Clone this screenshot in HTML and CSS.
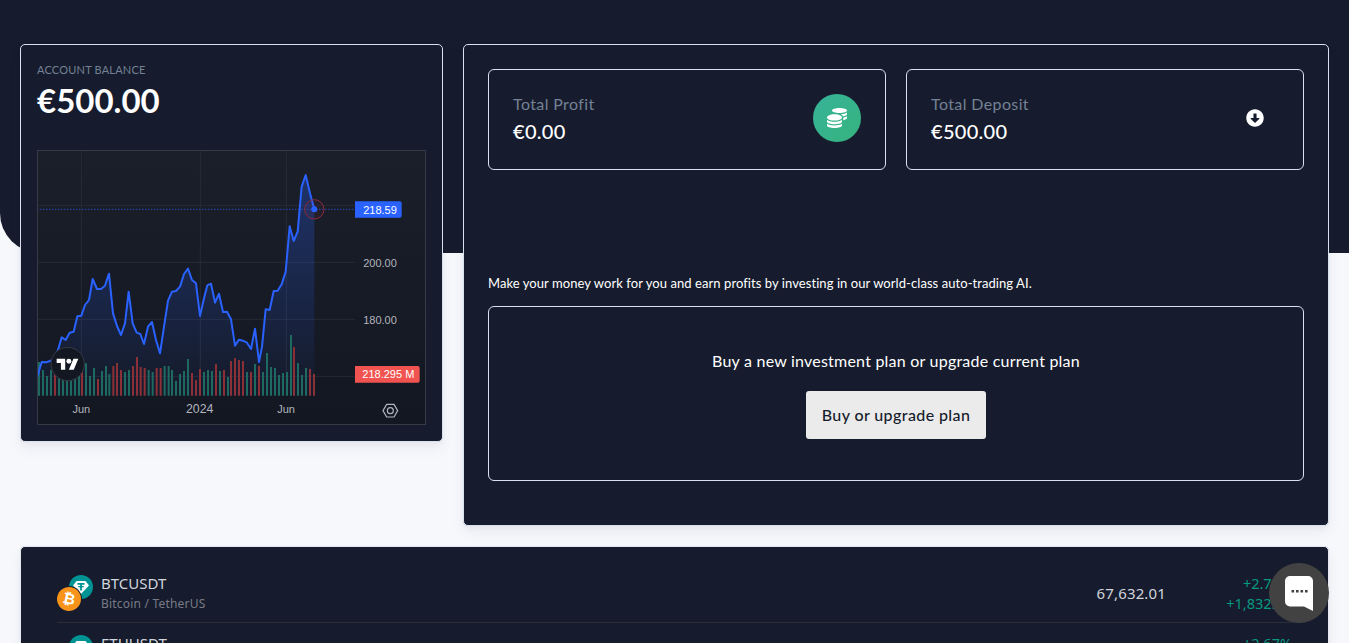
FILE: index.html
```html
<!DOCTYPE html>
<html lang="en">
<head>
    <meta charset="UTF-8">
    <meta name="viewport" content="width=device-width, initial-scale=1.0">
    <title>Dashboard</title>
    <link rel="stylesheet" href="styles.css">
</head>
<body>
    <div class="hero"></div>

    <main class="content">
        <div class="top-row">
            <section class="card balance-card">
                <p class="balance-label">Account Balance</p>
                <h1 class="balance-value">€500.00</h1>

                <div class="chart">
                    <svg class="chart-svg" viewBox="54 63 1161 819" width="387" height="273">
                        <defs>
                            <linearGradient id="chart-bg" x1="0" y1="0" x2="0" y2="1">
                                <stop offset="0" stop-color="#1b1f29"/>
                                <stop offset="1" stop-color="#131722"/>
                            </linearGradient>
                            <linearGradient id="area-fill" x1="0" y1="0" x2="0" y2="1">
                                <stop offset="0" stop-color="#2962ff" stop-opacity="0.3"/>
                                <stop offset="1" stop-color="#2962ff" stop-opacity="0.03"/>
                            </linearGradient>
                        </defs>

                        <rect x="52" y="60" width="1164" height="823" fill="url(#chart-bg)"/>

                        <!-- grid -->
                        <path class="grid" d="M52 226H1005M52 397H1005M52 568H1005M52 739H1005M184 60V797M541 60V797M799 60V797"/>

                        <!-- area + line -->
                        <polygon fill="url(#area-fill)" points="52,797 52,740 65,696 78,697 90,693 102,687 114,660 125,622 137,630 149,608 161,605 172,559 184,557 195,525 207,510 218,447 231,477 243,477 255,467 267,431 279,550 291,588 303,615 315,580 326,485 338,580 350,608 361,612 372,642 384,590 396,576 408,630 420,670 432,590 444,512 456,485 468,483 480,470 492,432 504,416 516,450 528,460 540,558 552,505 562,466 573,461 585,518 597,491 609,546 621,545 633,568 645,647 657,629 669,632 681,638 693,657 705,596 717,696 726,650 737,538 749,540 761,483 773,482 785,463 797,425 809,289 821,333 833,305 845,170 857,135 870,190 883,238 883,797"/>

                        <!-- volume -->
                        <path class="vol-up" d="M57 797V696M69 797V720M81 797V738M93 797V720M117 797V725M129 797V735M141 797V730M153 797V725M165 797V720M177 797V715M198 797V700M210 797V738M222 797V714M246 797V723M258 797V708M268 797V732M315 797V726M327 797V720M386 797V720M398 797V726M434 797V708M446 797V708M456 797V720M468 797V753M480 797V732M492 797V723M504 797V687M552 797V726M564 797V720M576 797V723M600 797V723M624 797V741M681 797V726M705 797V702M729 797V726M741 797V669M753 797V711M765 797V714M777 797V735M789 797V729M801 797V726M813 797V615M834 797V699M846 797V735M858 797V714"/>
                        <path class="vol-down" d="M105 797V730M186 797V700M234 797V747M280 797V708M291 797V699M303 797V720M339 797V708M351 797V681M362 797V711M374 797V714M410 797V714M422 797V714M516 797V729M528 797V750M540 797V717M588 797V702M612 797V720M633 797V693M645 797V684M657 797V690M669 797V693M693 797V726M717 797V708M822 797V651M870 797V717M882 797V732"/>

                        <polyline class="price-line" points="52,740 65,696 78,697 90,693 102,687 114,660 125,622 137,630 149,608 161,605 172,559 184,557 195,525 207,510 218,447 231,477 243,477 255,467 267,431 279,550 291,588 303,615 315,580 326,485 338,580 350,608 361,612 372,642 384,590 396,576 408,630 420,670 432,590 444,512 456,485 468,483 480,470 492,432 504,416 516,450 528,460 540,558 552,505 562,466 573,461 585,518 597,491 609,546 621,545 633,568 645,647 657,629 669,632 681,638 693,657 705,596 717,696 726,650 737,538 749,540 761,483 773,482 785,463 797,425 809,289 821,333 833,305 845,170 857,135 870,190 883,238"/>
                        <path class="last-price" d="M52 238H1005"/>
                        <circle class="pulse" cx="883" cy="238" r="29"/>
                        <circle class="dot" cx="883" cy="238" r="9"/>

                        <!-- axis labels -->
                        <path class="tag-blue" d="M1005 214H1139a6 6 0 0 1 6 6V257a6 6 0 0 1 -6 6H1005Z"/>
                        <text class="axis-tag" x="1080" y="251">218.59</text>
                        <text class="axis-text" x="1080" y="412">200.00</text>
                        <text class="axis-text" x="1080" y="583">180.00</text>
                        <path class="tag-red" d="M1005 708H1193a6 6 0 0 1 6 6V752a6 6 0 0 1 -6 6H1005Z"/>
                        <text class="axis-tag" x="1105" y="745">218.295 M</text>
                        <text class="axis-text" x="184" y="850">Jun</text>
                        <text class="axis-text axis-year" x="539" y="850">2024</text>
                        <text class="axis-text" x="798" y="850">Jun</text>

                        <!-- settings hexagon -->
                        <path class="gear" d="M1100 823H1122L1133 842L1122 861H1100L1089 842Z"/>
                        <circle class="gear" cx="1111" cy="842" r="9"/>

                        <!-- tv logo -->
                        <circle class="tv-badge" cx="143" cy="702" r="50"/>
                        <g class="tv-mark" transform="translate(110 679) scale(1.83)">
                            <path d="M14 22H7V11H0V4h14v18zM28 22h-8l7.5-18h8L28 22z"/>
                            <circle cx="20" cy="8" r="4"/>
                        </g>
                    </svg>
                </div>
            </section>

            <section class="card summary-card">
                <div class="stat-row">
                    <div class="stat-box">
                        <div>
                            <p class="stat-label">Total Profit</p>
                            <p class="stat-value">€0.00</p>
                        </div>
                        <span class="stat-icon stat-icon-green">
                            <svg viewBox="0 0 512 512" width="20" height="20"><path fill="#fff" d="M0 405.3V448c0 35.3 86 64 192 64s192-28.7 192-64v-42.7C342.7 434.4 267.2 448 192 448S41.3 434.4 0 405.3zM320 128c106 0 192-28.7 192-64S426 0 320 0 128 28.7 128 64s86 64 192 64zM0 300.4V352c0 35.3 86 64 192 64s192-28.7 192-64v-51.6c-41.3 34-116.9 51.6-192 51.6S41.3 334.4 0 300.4zm416 11c57.3-11.1 96-31.7 96-55.4v-42.7c-23.2 16.4-57.3 27.6-96 34.5v63.6zM192 160C86 160 0 195.8 0 240s86 80 192 80 192-35.8 192-80-86-80-192-80zm219.3 56.3c60-10.8 100.7-32 100.7-56.3v-42.7c-35.5 25.1-96.5 38.6-160.7 41.8 29.5 14.3 51.2 33.5 60 57.2z"/></svg>
                        </span>
                    </div>
                    <div class="stat-box">
                        <div>
                            <p class="stat-label">Total Deposit</p>
                            <p class="stat-value">€500.00</p>
                        </div>
                        <span class="stat-icon">
                            <svg viewBox="0 0 512 512" width="18" height="18"><path fill="#fff" d="M504 256c0 137-111 248-248 248S8 393 8 256 119 8 256 8s248 111 248 248zM212 140v116h-70.9c-10.7 0-16.1 13-8.5 20.5l114.9 114.3c4.7 4.7 12.2 4.7 16.9 0l114.9-114.3c7.6-7.6 2.2-20.5-8.5-20.5H300V140c0-6.6-5.4-12-12-12h-64c-6.6 0-12 5.4-12 12z"/></svg>
                        </span>
                    </div>
                </div>

                <p class="intro">Make your money work for you and earn profits by investing in our world-class auto-trading AI.</p>

                <div class="plan-box">
                    <p class="plan-text">Buy a new investment plan or upgrade current plan</p>
                    <a class="btn" href="#">Buy or upgrade plan</a>
                </div>
            </section>
        </div>

        <section class="card market-card">
            <div class="market-row">
                <div class="pair">
                    <span class="pair-icons">
                        <svg class="coin-back" viewBox="0 0 24 24" width="24" height="24">
                            <circle cx="12" cy="12" r="12" fill="#009393"/>
                            <path fill="#fff" d="M7.5 6h9l3.5 4.5L12 19 4 10.500z"/>
                            <path fill="#009393" d="M8.500 8h7v1.700h-2.600v1.300c1.200.1 2.200.3 2.200.7s-1 .6-2.200.7v3h-1.800v-3c-1.200-.1-2.200-.3-2.200-.7s1-.6 2.200-.7V9.700H8.500z"/>
                        </svg>
                        <span class="coin-front">₿</span>
                    </span>
                    <div>
                        <p class="pair-name">BTCUSDT</p>
                        <p class="pair-desc">Bitcoin / TetherUS</p>
                    </div>
                </div>
                <p class="price">67,632.01</p>
                <div class="change">
                    <p>+2.78%</p>
                    <p>+1,832.01</p>
                </div>
            </div>
            <div class="market-row">
                <div class="pair">
                    <span class="pair-icons">
                        <svg class="coin-back" viewBox="0 0 24 24" width="24" height="24">
                            <circle cx="12" cy="12" r="12" fill="#009393"/>
                            <path fill="#fff" d="M7.5 6h9l3.5 4.5L12 19 4 10.500z"/>
                        </svg>
                    </span>
                    <div>
                        <p class="pair-name">ETHUSDT</p>
                    </div>
                </div>
                <div class="change">
                    <p>+2.67%</p>
                </div>
            </div>
        </section>
    </main>

    <button type="button" class="chat-btn" aria-label="Chat">
        <svg viewBox="0 0 28 35" width="28" height="35">
            <path fill="#fff" d="M5 0H23a5 5 0 0 1 5 5V35L19 30.500H5a5 5 0 0 1 -5 -5V5a5 5 0 0 1 5 -5Z"/>
            <path fill="#424242" d="M6.500 14h2.600v2.600H6.500zM11 14h2.600v2.600H11zM15.500 14h2.600v2.600H15.500zM20 14h2.600v2.600H20z"/>
        </svg>
    </button>
</body>
</html>
```

FILE: styles.css
```css
:root {
    --navy: #161c2d;
    --line: #d8e2ef;
    --muted: #748194;
    --up: #089981;
}

* {
    box-sizing: border-box;
    margin: 0;
    padding: 0;
}

html, body {
    height: 643px;
    overflow: hidden;
}

body {
    font-family: 'Lato', 'Noto Sans', sans-serif;
    background-color: #f7f8fc;
    color: #fff;
    position: relative;
}

.hero {
    position: absolute;
    top: 0;
    left: 0;
    right: 0;
    height: 253px;
    background-color: var(--navy);
    border-bottom-left-radius: 40px;
}

.content {
    position: relative;
    padding: 44px 20px 0;
}

.top-row {
    display: grid;
    grid-template-columns: 423px 866px;
    column-gap: 20px;
    align-items: start;
}

.card {
    background-color: var(--navy);
    border: 1px solid var(--line);
    border-radius: 5px;
    box-shadow: 0 7px 14px rgba(65, 69, 88, 0.06), 0 3px 6px rgba(0, 0, 0, 0.03);
}

/* balance + chart */
.balance-card {
    height: 398px;
    padding: 18px 16px 16px;
}

.balance-label {
    font-size: 11px;
    line-height: 14px;
    letter-spacing: 0.2px;
    text-transform: uppercase;
    color: var(--muted);
}

.balance-value {
    margin-top: 3px;
    font-size: 33px;
    line-height: 40px;
    font-weight: 700;
}

.chart {
    margin-top: 30px;
    width: 389px;
    height: 275px;
    border: 1px solid #363a45;
}

.chart-svg {
    display: block;
}

.grid {
    fill: none;
    stroke: #2a2e39;
    stroke-width: 2.5;
}

.vol-up {
    fill: none;
    stroke: #1e6a60;
    stroke-width: 6;
}

.vol-down {
    fill: none;
    stroke: #8c3038;
    stroke-width: 6;
}

.price-line {
    fill: none;
    stroke: #2962ff;
    stroke-width: 6;
    stroke-linejoin: round;
}

.last-price {
    stroke: #2962ff;
    stroke-width: 3;
    stroke-dasharray: 3 6;
}

.pulse {
    fill: rgba(242, 54, 69, 0.05);
    stroke: #8e2a3d;
    stroke-width: 3;
}

.dot {
    fill: #2962ff;
}

.tag-blue {
    fill: #2962ff;
}

.tag-red {
    fill: #f05350;
}

.axis-text,
.axis-tag {
    font-family: 'Liberation Sans', sans-serif;
    font-size: 33px;
    text-anchor: middle;
}

.axis-text {
    fill: #b2b5be;
}

.axis-year {
    font-size: 37px;
}

.axis-tag {
    fill: #fff;
}

.gear {
    fill: none;
    stroke: #b2b5be;
    stroke-width: 3.5;
    stroke-linejoin: round;
}

.tv-badge {
    fill: #131722;
    stroke: #363a45;
    stroke-width: 3;
}

.tv-mark {
    fill: #fff;
}

/* right summary */
.summary-card {
    height: 482px;
    padding: 24px;
}

.stat-row {
    display: grid;
    grid-template-columns: 398px 398px;
    column-gap: 20px;
}

.stat-box {
    height: 101px;
    padding: 0 24px;
    display: flex;
    align-items: center;
    justify-content: space-between;
    border: 1px solid var(--line);
    border-radius: 6px;
}

.stat-label {
    font-size: 16px;
    line-height: 24px;
    letter-spacing: 0.38px;
    color: var(--muted);
}

.stat-value {
    margin: 1px 0 2px;
    font-size: 20px;
    line-height: 28px;
    letter-spacing: 0.3px;
    font-weight: 500;
}

.stat-icon {
    width: 48px;
    height: 48px;
    margin-bottom: 4px;
    border-radius: 50%;
    display: flex;
    align-items: center;
    justify-content: center;
}

.stat-icon-green {
    background: linear-gradient(135deg, #37b399, #36b37e);
}

.intro {
    margin-top: 104px;
    font-size: 13px;
    line-height: 18px;
    letter-spacing: 0.065px;
}

.plan-box {
    margin-top: 14px;
    height: 175px;
    border: 1px solid var(--line);
    border-radius: 6px;
    padding-top: 42px;
    display: flex;
    flex-direction: column;
    align-items: center;
}

.plan-text {
    font-size: 16px;
    line-height: 24px;
    letter-spacing: 0.22px;
}

.btn {
    margin-top: 18px;
    width: 180px;
    height: 48px;
    line-height: 47px;
    text-align: center;
    background-color: #ebebeb;
    color: var(--navy);
    border-radius: 3px;
    font-size: 16px;
    font-weight: 500;
    letter-spacing: 0.4px;
    text-decoration: none;
}

/* market list */
.market-card {
    margin-top: 20px;
    height: 300px;
    padding: 16px 36px 0;
    border-color: #e4e7f2;
}

.market-row {
    display: flex;
    align-items: flex-start;
    height: 60px;
    padding-top: 11px;
    border-bottom: 1px solid #2a2e39;
    font-family: 'Noto Sans', sans-serif;
}

.pair {
    flex: 1;
    display: flex;
    gap: 8px;
}

.pair-icons {
    position: relative;
    width: 36px;
    height: 36px;
}

.coin-back {
    position: absolute;
    top: 1px;
    left: 12px;
}

.coin-front {
    position: absolute;
    top: 13px;
    left: 0;
    width: 24px;
    height: 24px;
    border-radius: 50%;
    background-color: #f7931a;
    box-shadow: 0 0 0 1px var(--navy);
    font-family: 'DejaVu Sans', sans-serif;
    font-size: 15px;
    font-weight: 700;
    line-height: 24px;
    text-align: center;
    transform: rotate(12deg);
}

.pair-name {
    margin: -1px 0 1px;
    font-size: 15px;
    line-height: 20px;
    color: #d1d4dc;
}

.pair-desc {
    font-size: 12px;
    line-height: 20px;
    letter-spacing: 0.2px;
    color: #787b86;
}

.price {
    width: 100px;
    margin: 9px -4px 0 0;
    text-align: right;
    font-size: 15px;
    line-height: 20px;
    letter-spacing: 0.15px;
    color: #d1d4dc;
}

.change {
    width: 130px;
    margin-top: -1px;
    text-align: right;
    font-size: 14.5px;
    line-height: 20px;
    color: var(--up);
}

/* chat launcher */
.chat-btn {
    position: fixed;
    left: 1269px;
    top: 563px;
    width: 60px;
    height: 60px;
    border: none;
    border-radius: 50%;
    background-color: #424242;
    display: flex;
    align-items: center;
    justify-content: center;
}
```
